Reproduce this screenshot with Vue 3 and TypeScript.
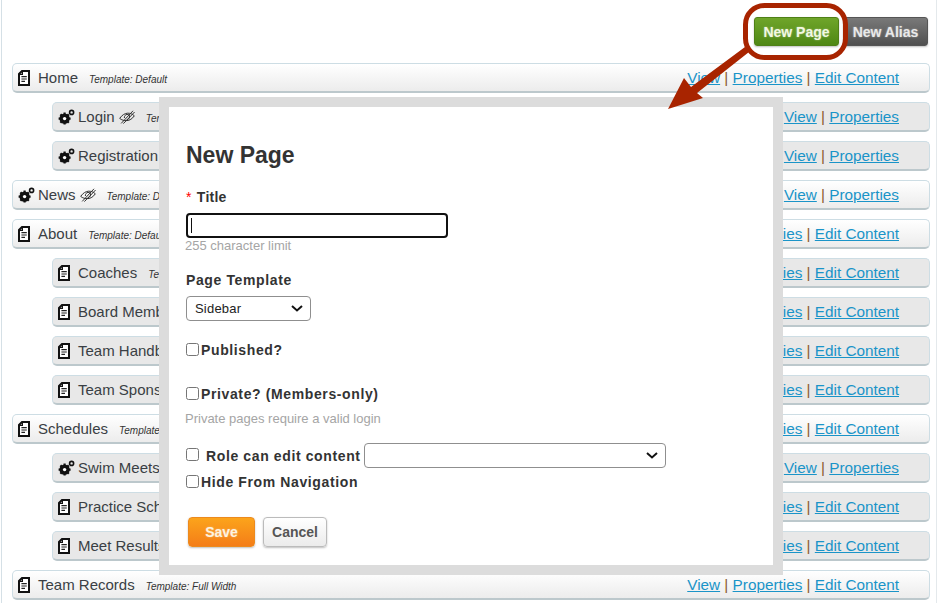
<script setup lang="ts">
interface Row {
  name: string;
  icon: 'doc' | 'gear';
  hidden?: boolean;
  template: string;
  child?: boolean;
  edit: boolean;
}
const rows: Row[] = [
  { name: 'Home', icon: 'doc', template: 'Default', edit: true },
  { name: 'Login', icon: 'gear', hidden: true, template: 'Default', child: true, edit: false },
  { name: 'Registration', icon: 'gear', template: 'Default', child: true, edit: false },
  { name: 'News', icon: 'gear', hidden: true, template: 'Default', edit: false },
  { name: 'About', icon: 'doc', template: 'Default', edit: true },
  { name: 'Coaches', icon: 'doc', template: 'Default', child: true, edit: true },
  { name: 'Board Members', icon: 'doc', template: 'Default', child: true, edit: true },
  { name: 'Team Handbook', icon: 'doc', template: 'Default', child: true, edit: true },
  { name: 'Team Sponsors', icon: 'doc', template: 'Default', child: true, edit: true },
  { name: 'Schedules', icon: 'doc', template: 'Default', edit: true },
  { name: 'Swim Meets', icon: 'gear', template: 'Default', child: true, edit: false },
  { name: 'Practice Schedule', icon: 'doc', template: 'Default', child: true, edit: true },
  { name: 'Meet Results', icon: 'doc', template: 'Default', child: true, edit: true },
  { name: 'Team Records', icon: 'doc', template: 'Full Width', edit: true },
];
</script>

<template>
  <div class="page">
    <div class="toolbar">
      <button class="tb green">New Page</button>
      <button class="tb gray">New Alias</button>
    </div>
    <div class="list">
      <div v-for="r in rows" :key="r.name" class="row" :class="{ child: r.child }">
        <svg v-if="r.icon === 'doc'" class="ico-doc" viewBox="0 0 12 16" width="12" height="16">
          <path d="M4 1H11V15H1V4Z" fill="#fff" stroke="#111" stroke-width="2" />
          <path d="M3.4 6.6H8.8M3.4 9H8.8M3.4 11.4H7" fill="none" stroke="#222" stroke-width="1.1" />
          <path d="M1 4.4H4.4V1" fill="none" stroke="#111" stroke-width="1.2" />
        </svg>
        <svg v-else class="ico-gear" viewBox="0 0 17 16" width="17" height="16">
          <circle cx="6.6" cy="9.6" r="3.7" fill="none" stroke="#111" stroke-width="3" />
          <path d="M6.6 3.6V15.6M.6 9.6H12.6M2.4 5.4L10.8 13.8M10.8 5.4L2.4 13.8" stroke="#111" stroke-width="2.2" />
          <circle cx="6.6" cy="9.6" r="1.7" fill="#fff" />
          <circle cx="13.6" cy="3.4" r="2" fill="none" stroke="#111" stroke-width="1.6" />
        </svg>
        <span class="name">{{ r.name }}</span>
        <svg v-if="r.hidden" class="ico-eye" viewBox="0 0 16 14" width="16" height="14">
          <path d="M.7 8.4C3 5 5.8 3.4 8.4 3.2C11 3 13.4 4 15.3 5.8C13.2 9 10.6 10.4 8 10.6C5 10.8 2.6 10 .7 8.4Z" fill="none" stroke="#333" stroke-width="1" />
          <path d="M5.4 8C5.2 6 6.4 4.6 8 4.4C9.6 4.2 10.8 5.4 10.6 7C10.4 8.6 9 9.6 7.8 9.6" fill="none" stroke="#333" stroke-width="1" />
          <path d="M2.2 13.4L14 .8M4.4 13.6L15.6 2" stroke="#333" stroke-width="1" />
        </svg>
        <em class="tpl">Template: {{ r.template }}</em>
        <span class="links">
          <a href="#">View</a> | <a href="#">Properties</a>
          <template v-if="r.edit"> | <a href="#">Edit Content</a></template>
        </span>
      </div>
    </div>

    <div class="modal">
      <h2>New Page</h2>
      <div class="lbl title"><span class="req">*</span> Title</div>
      <div class="input"><i class="caret"></i></div>
      <div class="hint">255 character limit</div>
      <div class="lbl tpl-lbl">Page Template</div>
      <div class="sel sel-tpl">Sidebar
        <svg class="chev" viewBox="0 0 12 7" width="12" height="7"><path d="M1 1L6 5.5L11 1" fill="none" stroke="#111" stroke-width="2" /></svg>
      </div>
      <label class="chk pub"><input type="checkbox" /><span>Published?</span></label>
      <label class="chk priv"><input type="checkbox" /><span>Private? (Members-only)</span></label>
      <div class="hint hint2">Private pages require a valid login</div>
      <div class="role">
        <label class="chk"><input type="checkbox" /><span class="role-txt">Role can edit content</span></label>
        <div class="sel sel-role">
          <svg class="chev" viewBox="0 0 12 7" width="12" height="7"><path d="M1 1L6 5.5L11 1" fill="none" stroke="#111" stroke-width="2" /></svg>
        </div>
      </div>
      <label class="chk hide"><input type="checkbox" /><span>Hide From Navigation</span></label>
      <div class="actions">
        <button class="save">Save</button>
        <button class="cancel">Cancel</button>
      </div>
    </div>

    <svg class="callout" width="943" height="603" viewBox="0 0 943 603">
      <rect x="745.5" y="5.5" width="100" height="52" rx="19" fill="none" stroke="#a82400" stroke-width="5" />
      <path d="M745 47L749 52L697 93L703 98L668 109L684 78L691 87Z" fill="#a82400" />
    </svg>
  </div>
</template>

<style>
html, body { margin: 0; background: #fff; }
</style>

<style scoped>
.page {
  position: relative;
  width: 943px;
  height: 603px;
  overflow: hidden;
  box-sizing: border-box;
  font-family: "Liberation Sans", Arial, sans-serif;
  color: #333;
  background: #fff;
}
.page::before {
  content: "";
  position: absolute;
  left: 1px;
  top: 0;
  bottom: 0;
  width: 1px;
  background: #d5e0e6;
}
.page::after {
  content: "";
  position: absolute;
  left: 936px;
  top: 0;
  bottom: 0;
  width: 1px;
  background: #e4e9ec;
}
.toolbar {
  display: flex;
  justify-content: flex-end;
  gap: 4px;
  padding: 17px 15px 0 0;
  height: 29px;
  margin-bottom: 17px;
}
.tb {
  border: 1px solid transparent;
  height: 29px;
  box-sizing: border-box;
  padding: 0;
  font: bold 14px "Liberation Sans", Arial, sans-serif;
  color: #fff;
  border-radius: 3px;
  text-shadow: 0 0 2px rgba(255, 255, 255, .45);
  box-shadow: 0 1px 2px rgba(0, 0, 0, .25);
}
.green {
  width: 85px;
  background: linear-gradient(#6fa52a, #4f8714);
  border-color: #4f8016;
  color: #f2f8e2;
}
.gray {
  width: 85px;
  background: linear-gradient(#797979, #505050);
  border-color: #555;
  color: #e9e9e9;
}
.list {
  display: flex;
  flex-direction: column;
  gap: 9px;
  padding: 0 13px 0 12px;
}
.row {
  display: flex;
  align-items: center;
  box-sizing: border-box;
  height: 30px;
  padding: 0 30px 0 5px;
  border: 1px solid #cddde4;
  border-bottom: 2px solid #bcc8cc;
  border-radius: 5px;
  background: linear-gradient(#fff, #ececec);
  white-space: nowrap;
}
.row.child {
  margin-left: 40px;
  background: #e8e8e8;
}
.ico-doc { flex: none; margin-right: 8px; }
.ico-gear { flex: none; margin-right: 3px; }
.row .name {
  font-size: 15px;
  color: #3a3f44;
}
.ico-eye { flex: none; margin-left: 4px; }
.tpl {
  margin-left: 11px;
  font-size: 10px;
  padding-top: 3px;
  color: #333;
}
.links {
  margin-left: auto;
  font-size: 15.3px;
  color: #8a5a30;
}
.links a { color: #1a94c8; text-decoration: underline; }

.modal {
  position: absolute;
  left: 159px;
  top: 97px;
  width: 624px;
  height: 478px;
  box-sizing: border-box;
  border: 10px solid #dcdcdc;
  background: #fff;
  padding: 34px 17px 0;
  font-size: 14px;
}
h2 {
  margin: 0;
  font-size: 23px;
  line-height: 28px;
  color: #333;
}
.lbl {
  font-weight: bold;
  letter-spacing: .62px;
  color: #333;
  line-height: 18px;
}
.title { margin-top: 19px; letter-spacing: .25px; }
.req { color: #f00; font-weight: normal; margin-right: 1px; }
.input {
  margin-top: 7px;
  box-sizing: border-box;
  width: 262px;
  height: 25px;
  border: 2px solid #111;
  border-radius: 4px;
  padding: 3px 3px;
}
.caret { display: block; width: 1px; height: 15px; background: #111; }
.hint {
  font-size: 13px;
  line-height: 15px;
  color: #a5a5a5;
  margin-top: 0;
  margin-left: -1px;
}
.tpl-lbl { margin-top: 18px; }
.sel {
  position: relative;
  box-sizing: border-box;
  height: 25px;
  border: 1px solid #8f8f8f;
  border-radius: 4px;
  font-size: 13px;
  line-height: 23px;
  color: #222;
  letter-spacing: .2px;
  background: #fff;
}
.sel-tpl { margin-top: 7px; width: 125px; padding-left: 8px; }
.chev { position: absolute; right: 7px; top: 8px; }
.chk {
  display: flex;
  align-items: center;
  font-weight: bold;
  letter-spacing: .62px;
  color: #333;
  line-height: 18px;
}
.chk input {
  margin: -2px 2px 0 0;
  width: 13px;
  height: 13px;
  flex: none;
}
.pub { margin-top: 20px; }
.priv { margin-top: 26px; }
.hint2 { margin-top: 8px; }
.role {
  display: flex;
  align-items: center;
  margin-top: 17px;
  height: 25px;
}
.role-txt { margin-left: 5px; }
.sel-role { width: 302px; margin-left: 3px; }
.hide { margin-top: 5px; }
.actions {
  display: flex;
  gap: 8px;
  margin-top: 26px;
  padding-left: 2px;
}
.actions button {
  height: 30px;
  box-sizing: border-box;
  border-radius: 4px;
  padding: 0;
  font: bold 14px "Liberation Sans", Arial, sans-serif;
  box-shadow: 0 1px 2px rgba(0, 0, 0, .25);
  text-shadow: 0 0 2px rgba(255, 255, 255, .4);
}
.save {
  width: 67px;
  color: #fdf3e0;
  background: linear-gradient(#fca41b, #f47d18);
  border: 1px solid #ec8a1e;
}
.cancel {
  width: 64px;
  color: #555;
  background: linear-gradient(#fff, #ebebeb);
  border: 1px solid #bbb;
}
.callout {
  position: absolute;
  left: 0;
  top: 0;
  pointer-events: none;
}
</style>
